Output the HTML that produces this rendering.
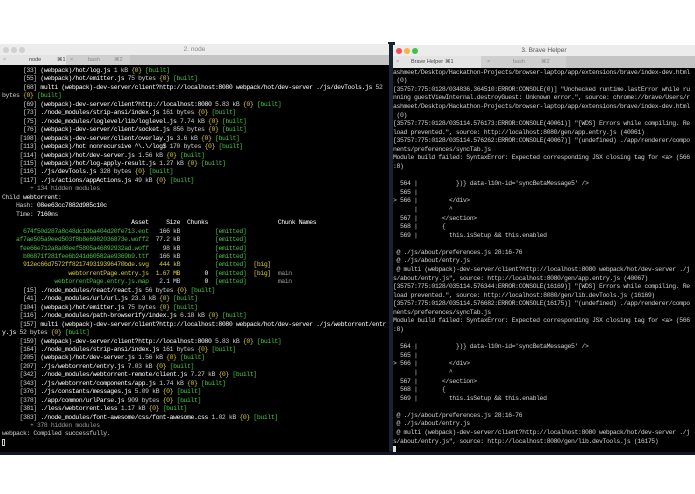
<!DOCTYPE html>
<html><head><meta charset="utf-8"><style>
*{margin:0;padding:0;box-sizing:border-box}
body{width:695px;height:494px;background:#fff;position:relative;overflow:hidden;font-family:"Liberation Sans",sans-serif}
.win{position:absolute;background:#000;overflow:hidden}
.title{position:absolute;left:0;right:0;height:11px;background:#ececec;font-size:6.5px;color:#888;text-align:center;line-height:11px}
.tabs{position:absolute;left:0;right:0;background:#c4c4c4;font-size:5.5px;color:#444}
.tab{position:absolute;top:0;bottom:0;line-height:10px}
.dot{position:absolute;width:6px;height:6px;border-radius:50%;top:2.5px}
pre{position:absolute;font-family:"Liberation Mono",monospace;font-size:6.5px;letter-spacing:-0.41px;color:#cfcfcf;white-space:pre}
.g{color:#43c843}.y{color:#d8cc3a}.w{color:#fff}.a{color:#46c046}.gr{color:#999}
</style></head><body>
<div style="position:absolute;left:388px;top:42px;width:7px;height:412px;background:#1b2230"></div>
<div style="position:absolute;left:0;top:451px;width:695px;height:4px;background:#101622"></div>

<div class="win" style="left:0;top:44px;width:389px;height:408px">
 <div class="title" style="top:0">2. node
  <div class="dot" style="left:3px;background:#d0d0d0"></div><div class="dot" style="left:11px;background:#d0d0d0"></div><div class="dot" style="left:19px;background:#d0d0d0"></div></div>
 <div class="tabs" style="top:11px;height:10px">
  <div class="tab" style="left:0;width:66px;background:#e4e4e4"><span style="position:absolute;left:3px;color:#999">×</span><span style="position:absolute;left:29px">node</span><span style="position:absolute;left:57px">⌘1</span></div>
  <div class="tab" style="left:66px;width:64px;background:#cfcfcf;color:#888"><span style="position:absolute;left:4px">×</span><span style="position:absolute;left:22px">bash</span><span style="position:absolute;left:48px">⌘2</span></div>
 </div>
<pre style="left:2px;top:23px;line-height:8.45px">      [33] <span class="w">(webpack)/hot/log.js</span> 1 kB <span class="y">{0}</span> <span class="g">[built]</span>
      [55] <span class="w">(webpack)/hot/emitter.js</span> 75 bytes <span class="y">{0}</span> <span class="g">[built]</span>
      [68] <span class="w">multi (webpack)-dev-server/client?http://localhost:8080 webpack/hot/dev-server ./js/devTools.js</span> 52
bytes <span class="y">{0}</span> <span class="g">[built]</span>
      [69] <span class="w">(webpack)-dev-server/client?http://localhost:8080</span> 5.83 kB <span class="y">{0}</span> <span class="g">[built]</span>
      [73] <span class="w">./node_modules/strip-ansi/index.js</span> 161 bytes <span class="y">{0}</span> <span class="g">[built]</span>
      [75] <span class="w">./node_modules/loglevel/lib/loglevel.js</span> 7.74 kB <span class="y">{0}</span> <span class="g">[built]</span>
      [76] <span class="w">(webpack)-dev-server/client/socket.js</span> 856 bytes <span class="y">{0}</span> <span class="g">[built]</span>
     [108] <span class="w">(webpack)-dev-server/client/overlay.js</span> 3.6 kB <span class="y">{0}</span> <span class="g">[built]</span>
     [113] <span class="w">(webpack)/hot nonrecursive ^\.\/log$</span> 170 bytes <span class="y">{0}</span> <span class="g">[built]</span>
     [114] <span class="w">(webpack)/hot/dev-server.js</span> 1.56 kB <span class="y">{0}</span> <span class="g">[built]</span>
     [115] <span class="w">(webpack)/hot/log-apply-result.js</span> 1.27 kB <span class="y">{0}</span> <span class="g">[built]</span>
     [116] <span class="w">./js/devTools.js</span> 328 bytes <span class="y">{0}</span> <span class="g">[built]</span>
     [117] <span class="w">./js/actions/appActions.js</span> 49 kB <span class="y">{0}</span> <span class="g">[built]</span>
        <span class="gr">+ 134 hidden modules</span>
Child <span class="w">webtorrent</span>:
    Hash: <span class="w">08ee63cc7882d985c10c</span>
    Time: <span class="w">7160</span>ms
                                     <span class="w">Asset</span>     <span class="w">Size</span>  <span class="w">Chunks</span>                    <span class="w">Chunk Names</span>
      <span class="a">674f50d287a8c48dc19ba404d20fe713.eot</span>   166 kB          <span class="a">[emitted]</span>
    <span class="a">af7ae505a9eed503f8b8e6982036873e.woff2</span>  77.2 kB          <span class="a">[emitted]</span>
     <span class="a">fee66e712a8a08eef5805a46892932ad.woff</span>    98 kB          <span class="a">[emitted]</span>
      <span class="a">b06871f281fee6b241d60582ae9369b9.ttf</span>   166 kB          <span class="a">[emitted]</span>
      <span class="y">912ec66d7572ff821749319396470bde.svg</span>   <span class="y">444 kB</span>          <span class="a">[emitted]</span>  <span class="y">[big]</span>
                   <span class="y">webtorrentPage.entry.js</span>  <span class="y">1.67 MB</span>       <span class="w">0</span>  <span class="a">[emitted]</span>  <span class="y">[big]</span>  <span class="gr">main</span>
               <span class="a">webtorrentPage.entry.js.map</span>   2.1 MB       <span class="w">0</span>  <span class="a">[emitted]</span>         <span class="gr">main</span>
      [15] <span class="w">./node_modules/react/react.js</span> 56 bytes <span class="y">{0}</span> <span class="g">[built]</span>
      [41] <span class="w">./node_modules/url/url.js</span> 23.3 kB <span class="y">{0}</span> <span class="g">[built]</span>
     [104] <span class="w">(webpack)/hot/emitter.js</span> 75 bytes <span class="y">{0}</span> <span class="g">[built]</span>
     [116] <span class="w">./node_modules/path-browserify/index.js</span> 6.18 kB <span class="y">{0}</span> <span class="g">[built]</span>
     [157] <span class="w">multi (webpack)-dev-server/client?http://localhost:8080 webpack/hot/dev-server ./js/webtorrent/entr
y.js</span> 52 bytes <span class="y">{0}</span> <span class="g">[built]</span>
     [159] <span class="w">(webpack)-dev-server/client?http://localhost:8080</span> 5.83 kB <span class="y">{0}</span> <span class="g">[built]</span>
     [164] <span class="w">./node_modules/strip-ansi/index.js</span> 161 bytes <span class="y">{0}</span> <span class="g">[built]</span>
     [205] <span class="w">(webpack)/hot/dev-server.js</span> 1.56 kB <span class="y">{0}</span> <span class="g">[built]</span>
     [207] <span class="w">./js/webtorrent/entry.js</span> 7.03 kB <span class="y">{0}</span> <span class="g">[built]</span>
     [342] <span class="w">./node_modules/webtorrent-remote/client.js</span> 7.27 kB <span class="y">{0}</span> <span class="g">[built]</span>
     [343] <span class="w">./js/webtorrent/components/app.js</span> 1.74 kB <span class="y">{0}</span> <span class="g">[built]</span>
     [376] <span class="w">./js/constants/messages.js</span> 5.09 kB <span class="y">{0}</span> <span class="g">[built]</span>
     [378] <span class="w">./app/common/urlParse.js</span> 909 bytes <span class="y">{0}</span> <span class="g">[built]</span>
     [381] <span class="w">./less/webtorrent.less</span> 1.17 kB <span class="y">{0}</span> <span class="g">[built]</span>
     [383] <span class="w">./node_modules/font-awesome/css/font-awesome.css</span> 1.02 kB <span class="y">{0}</span> <span class="g">[built]</span>
        <span class="gr">+ 378 hidden modules</span>
webpack: Compiled successfully.
<span style="display:inline-block;width:3px;height:7px;border:1px solid #ccc;vertical-align:-1px"></span></pre>
</div>

<div class="win" style="left:393px;top:45px;width:302px;height:407px">
 <div class="title" style="top:0;color:#555">3. Brave Helper
  <div class="dot" style="left:3px;background:#f0524f"></div><div class="dot" style="left:11px;background:#f6b53a"></div><div class="dot" style="left:19px;background:#3fc24a"></div></div>
 <div class="tabs" style="top:11px;height:12px">
  <div class="tab" style="left:0;width:88px;background:#e4e4e4;line-height:12px"><span style="position:absolute;left:3px;color:#999">×</span><span style="position:absolute;left:18px">Brave Helper</span><span style="position:absolute;left:52px">⌘1</span></div>
  <div class="tab" style="left:88px;width:85px;background:#cfcfcf;color:#888;line-height:12px"><span style="position:absolute;left:6px">×</span><span style="position:absolute;left:32px">bash</span><span style="position:absolute;left:60px">⌘2</span></div>
 </div>
<pre style="left:0;top:23.7px;line-height:8.58px">ashmeet/Desktop/Hackathon-Projects/browser-laptop/app/extensions/brave/index-dev.html
 (0)
[35757:775:0128/034836.364510:ERROR:CONSOLE(0)] "Unchecked runtime.lastError while ru
nning guestViewInternal.destroyGuest: Unknown error.", source: chrome://brave/Users/r
ashmeet/Desktop/Hackathon-Projects/browser-laptop/app/extensions/brave/index-dev.html
 (0)
[35757:775:0128/035114.576173:ERROR:CONSOLE(40061)] "[WDS] Errors while compiling. Re
load prevented.", source: http://localhost:8080/gen/app.entry.js (40061)
[35757:775:0128/035114.576262:ERROR:CONSOLE(40067)] "(undefined) ./app/renderer/compo
nents/preferences/syncTab.js
Module build failed: SyntaxError: Expected corresponding JSX closing tag for &lt;a&gt; (566
:8)

  564 |           })} data-l10n-id='syncBetaMessage5' /&gt;
  565 |
&gt; 566 |         &lt;/div&gt;
      |         ^
  567 |       &lt;/section&gt;
  568 |       {
  569 |         this.isSetup &amp;&amp; this.enabled

 @ ./js/about/preferences.js 28:16-76
 @ ./js/about/entry.js
 @ multi (webpack)-dev-server/client?http://localhost:8080 webpack/hot/dev-server ./j
s/about/entry.js", source: http://localhost:8080/gen/app.entry.js (40067)
[35757:775:0128/035114.576344:ERROR:CONSOLE(16169)] "[WDS] Errors while compiling. Re
load prevented.", source: http://localhost:8080/gen/lib.devTools.js (16169)
[35757:775:0128/035114.576682:ERROR:CONSOLE(16175)] "(undefined) ./app/renderer/compo
nents/preferences/syncTab.js
Module build failed: SyntaxError: Expected corresponding JSX closing tag for &lt;a&gt; (566
:8)

  564 |           })} data-l10n-id='syncBetaMessage5' /&gt;
  565 |
&gt; 566 |         &lt;/div&gt;
      |         ^
  567 |       &lt;/section&gt;
  568 |       {
  569 |         this.isSetup &amp;&amp; this.enabled

 @ ./js/about/preferences.js 28:16-76
 @ ./js/about/entry.js
 @ multi (webpack)-dev-server/client?http://localhost:8080 webpack/hot/dev-server ./j
s/about/entry.js", source: http://localhost:8080/gen/lib.devTools.js (16175)
<span style="display:inline-block;width:3px;height:7px;background:#ddd;vertical-align:-1px"></span></pre>
</div>
</body></html>
